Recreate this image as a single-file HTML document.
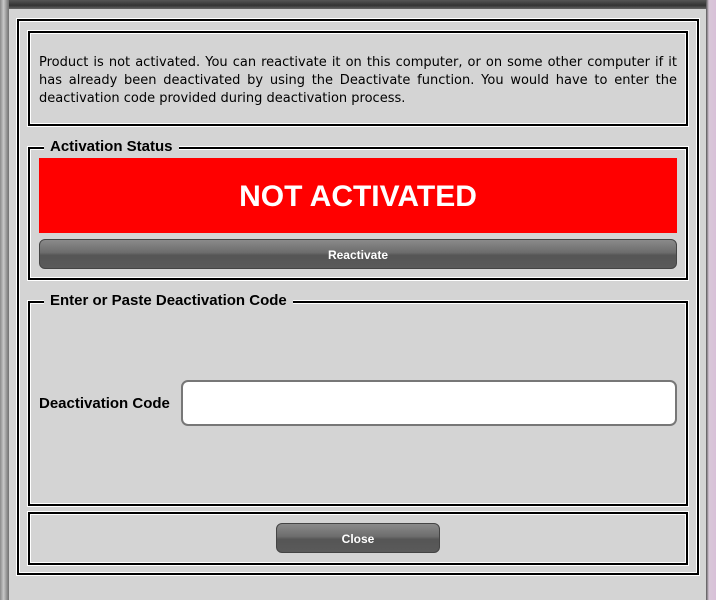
<!DOCTYPE html>
<html><head><style>
*{margin:0;padding:0;box-sizing:border-box}
body{width:716px;height:600px;background:#d4d4d4;position:relative;overflow:hidden;font-family:"DejaVu Sans","Liberation Sans",sans-serif}
.top{position:absolute;left:0;top:0;width:716px;height:9px;background:linear-gradient(#555,#333 60%,#666)}
.left{position:absolute;left:0;top:0;width:9px;height:600px;background:linear-gradient(90deg,#8a8a8a,#c8c8c8 40%,#9a9a9a 70%,#707070)}
.right{position:absolute;left:706px;top:0;width:10px;height:600px;background:linear-gradient(90deg,#555,#d8c8d8 30%,#d8c0d8)}
.b{position:absolute;border:2px solid #000;box-shadow:inset 0 0 0 1px #fff, 0 0 0 1px #fff}
.legend{position:absolute;background:#d4d4d4;font-family:"Liberation Sans",sans-serif;font-weight:bold;font-size:15px;padding:0 6px;color:#000}
.btn{position:absolute;border-radius:6px;background:linear-gradient(#8a8a8a,#6c6c6c 45%,#555 55%,#5a5a5a);border:1px solid #444;color:#fff;font-family:"Liberation Sans",sans-serif;font-weight:bold;font-size:12px;text-align:center}
</style></head><body>
<div class="top"></div><div class="left"></div><div class="right"></div>
<div class="b" style="left:17px;top:19px;width:682px;height:556px"></div>
<div class="b" style="left:28px;top:31px;width:660px;height:95px"></div>
<div style="position:absolute;left:39px;top:54px;width:638px;font-size:13px;line-height:18px;text-align:justify;color:#000">Product is not activated. You can reactivate it on this computer, or on some other computer if it has already been deactivated by using the Deactivate function. You would have to enter the deactivation code provided during deactivation process.</div>
<div class="b" style="left:28px;top:147px;width:660px;height:133px"></div>
<div class="legend" style="left:44px;top:138px">Activation Status</div>
<div style="position:absolute;left:39px;top:158px;width:638px;height:75px;background:#ff0000;color:#fff;font-family:'Liberation Sans',sans-serif;font-weight:bold;font-size:30px;text-align:center;line-height:78px">NOT ACTIVATED</div>
<div class="btn" style="left:39px;top:239px;width:638px;height:30px;line-height:30px">Reactivate</div>
<div class="b" style="left:28px;top:301px;width:660px;height:205px"></div>
<div class="legend" style="left:44px;top:292px">Enter or Paste Deactivation Code</div>
<div style="position:absolute;left:39px;top:395px;font-family:'Liberation Sans',sans-serif;font-weight:bold;font-size:15px">Deactivation Code</div>
<div style="position:absolute;left:181px;top:380px;width:496px;height:46px;background:#fff;border:2px solid #777;border-radius:7px"></div>
<div class="b" style="left:28px;top:512px;width:660px;height:53px"></div>
<div class="btn" style="left:276px;top:523px;width:164px;height:30px;line-height:30px">Close</div>
</body></html>
